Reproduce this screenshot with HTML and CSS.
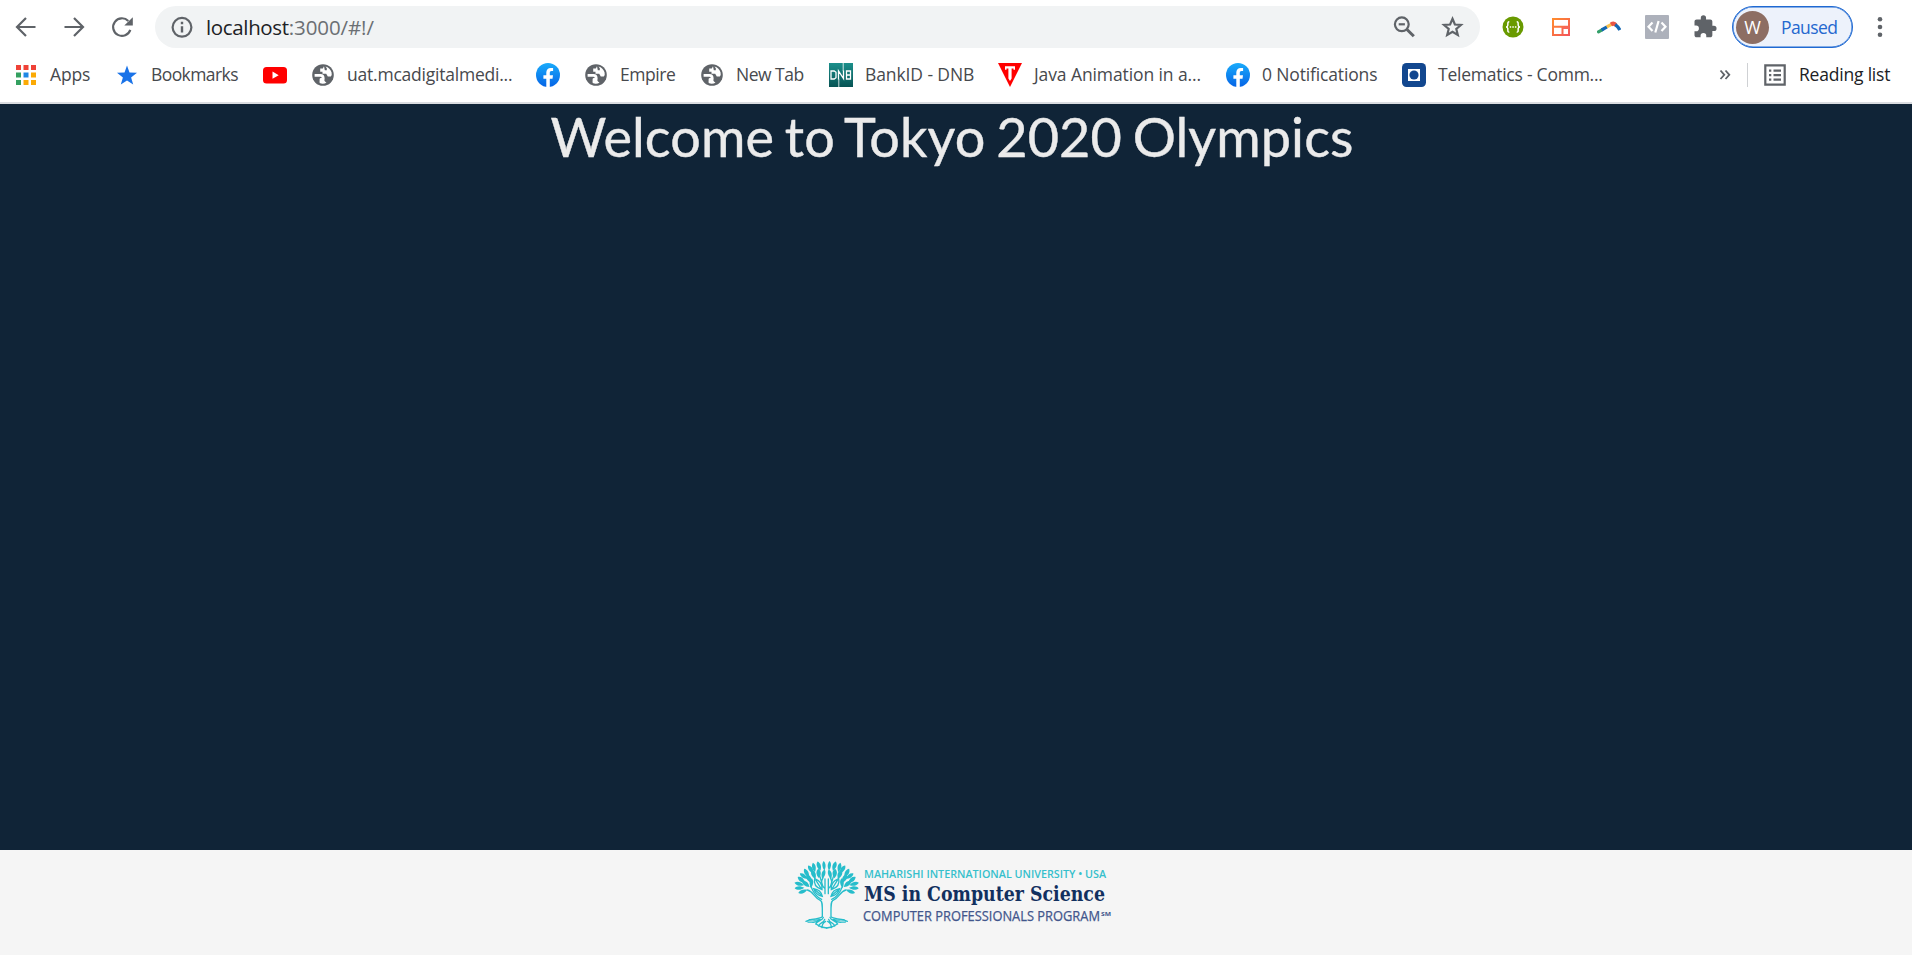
FILE: index.html
```html
<!DOCTYPE html>
<html lang="en">
<head>
<meta charset="utf-8">
<title>Tokyo 2020 Olympics</title>
<link rel="stylesheet" href="styles.css">
</head>
<body>
<svg class="defs" aria-hidden="true">
  <defs>
    <linearGradient id="fbg" x1="0" y1="0" x2="0" y2="1"><stop offset="0" stop-color="#19abfb"/><stop offset="1" stop-color="#0564e6"/></linearGradient>
    <linearGradient id="dnbg" x1="0" y1="0" x2="0" y2="1"><stop offset="0" stop-color="#1b8f8b"/><stop offset="1" stop-color="#075354"/></linearGradient>
    <linearGradient id="org" x1="0" y1="0" x2="1" y2="1"><stop offset="0" stop-color="#ff8b2d"/><stop offset="1" stop-color="#f4565a"/></linearGradient>
    <symbol id="globe" viewBox="0 0 24 24">
      <circle cx="12" cy="12" r="10.800" fill="#5f6368"/>
      <path fill="none" stroke="#fff" stroke-width="2.800" stroke-linejoin="round" d="M3.600 12.300H9.500C11.300 12.300 12.200 13.500 12.200 15.300V16.300H10V19.300"/>
      <path fill="#fff" d="M9.500 16H12.500L14 18.500L15.500 19.800Q12 21.500 8.600 20Z"/>
      <path fill="#fff" d="M13 3.300L11.800 5.600H9.200V8.800H11.500V10.800H15.200L16.800 13.600H19.800Q21.200 12 20.600 9.500C19.800 6.500 17.500 4 14.500 3.400L15.800 5.200V7.200H13.800Z"/>
    </symbol>
    <symbol id="fb" viewBox="0 0 24 24">
      <circle cx="12" cy="12" r="12" fill="url(#fbg)"/>
      <path fill="#fff" d="M10.300 24V15.700H7.400V12.300H10.300V9.600C10.300 6.600 12 4.900 14.700 4.900C15.900 4.900 17.100 5.100 17.100 5.100V8H15.600C14.200 8 13.800 8.900 13.800 9.800V12.300H17L16.500 15.700H13.800V24Z"/>
    </symbol>
    <path id="leaf" d="M0 -15C7 -8 7.500 2 0 14C-7.500 2 -7 -8 0 -15Z"/>
  </defs>
</svg>

<header class="chrome">
  <div class="toolbar">
    <nav class="nav">
      <svg class="i24" viewBox="0 0 24 24"><path class="line" d="M21.500 12H3.500M12 3L3 12L12 21"/></svg>
      <svg class="i24" viewBox="0 0 24 24"><path class="line" d="M2.500 12H20.500M12 3L21 12L12 21"/></svg>
      <svg class="i24" viewBox="0 0 24 24"><path class="line" d="M20.300 14.800A8.800 8.800 0 1 1 18.300 6"/><path class="solid" d="M22.800 2.200V10.600H14.300Z"/></svg>
    </nav>
    <div class="omnibox">
      <svg class="i24" viewBox="0 0 24 24"><circle class="line" cx="12" cy="12.300" r="9.400"/><path class="solid" d="M10.800 6.800H13.200V9.300H10.800ZM10.800 11.300H13.200V17.600H10.800Z"/></svg>
      <div class="url"><span class="host">localhost</span><span class="path">:3000/#!/</span></div>
      <svg class="i24 zoom" viewBox="0 0 24 24"><circle class="line" cx="9.800" cy="9.300" r="6.900"/><path class="line" d="M6.700 9.300H12.900"/><path class="line thick" d="M15 14.500L21.800 21.300"/></svg>
      <svg class="i24" viewBox="0 0 24 24"><path class="line miter" d="M12.500 3.800L14.900 9.500L21 10L16.300 14L17.800 20L12.500 16.800L7.200 20L8.700 14L4 10L10.100 9.500Z"/></svg>
    </div>
    <div class="extensions">
      <svg class="i24" viewBox="0 0 24 24"><circle cx="12" cy="12" r="10.500" fill="#699a00"/><path fill="none" stroke="#fff" stroke-width="1.500" d="M8.300 6.800C6.300 6.800 7 8.600 6.800 10.300C6.700 11.500 6.200 12 5 12C6.200 12 6.700 12.500 6.800 13.700C7 15.400 6.300 17.200 8.300 17.200M15.700 6.800C17.700 6.800 17 8.600 17.200 10.300C17.300 11.500 17.800 12 19 12C17.800 12 17.300 12.500 17.200 13.700C17 15.400 17.700 17.200 15.700 17.200"/><path stroke="#fff" stroke-width="1.500" stroke-dasharray="1.500 1.100" d="M8.700 12H15.600"/></svg>
      <svg class="i24" viewBox="0 0 24 24"><path fill="none" stroke="url(#org)" stroke-width="2" d="M4 4H20V20H4ZM4 11.800H20M13.500 11.800V20"/><path fill="#f7685a" d="M13.500 11.500H20V14H13.500Z"/></svg>
      <svg class="i24" viewBox="0 0 24 24"><g fill="none" stroke-width="3.200"><path stroke="#34a06a" stroke-linecap="round" d="M1.500 16.800L5 14.800"/><path stroke="#1467b3" d="M4.600 15L10 11.800"/><path stroke="#fbc14b" d="M9.800 11.900L14.500 9.300"/><path stroke="#e85545" stroke-width="4" d="M14 9.500Q17 7.500 19 10.300"/><path stroke="#1467b3" d="M18.200 9.600Q21 11.500 22.800 15"/></g></svg>
      <svg class="i24" viewBox="0 0 24 24"><rect width="24" height="24" rx="1" fill="#adb1bb"/><path fill="none" stroke="#fff" stroke-width="2.200" d="M7.500 7.500L3.500 11.700L7.500 16M16.500 7.500L20.500 11.700L16.500 16M13.600 6L10.300 17.500"/></svg>
      <svg class="i24" viewBox="0 0 24 24"><path class="solid" transform="translate(-.6 -.8) scale(1.050)" d="M20.500 11H19V7c0-1.100-.9-2-2-2h-4V3.500a2.500 2.500 0 0 0-5 0V5H4c-1.100 0-2 .9-2 2v3.800h1.500a2.700 2.700 0 0 1 0 5.400H2V20c0 1.100.9 2 2 2h3.800v-1.500a2.700 2.700 0 0 1 5.400 0V22H17c1.100 0 2-.9 2-2v-4h1.500a2.500 2.500 0 0 0 0-5z"/></svg>
    </div>
    <div class="profile"><span class="avatar">W</span><span class="paused">Paused</span></div>
    <svg class="i24 kebab" viewBox="0 0 24 24"><circle class="solid" cx="12" cy="4.300" r="2.300"/><circle class="solid" cx="12" cy="12" r="2.300"/><circle class="solid" cx="12" cy="19.700" r="2.300"/></svg>
  </div>

  <div class="bookmarks">
    <div class="bm"><svg class="i24" viewBox="0 0 24 24"><path fill="#ef4237" d="M2 2h5v5H2zM9.500 2h5v5h-5zM17 2h5v5h-5z"/><path fill="#34a060" d="M2 9.500h5v5H2zM2 17h5v5H2z"/><path fill="#1e88e5" d="M9.500 9.500h5v5h-5z"/><path fill="#fbaa04" d="M17 9.500h5v5h-5zM9.500 17h5v5h-5zM17 17h5v5h-5z"/></svg><span class="label w-apps">Apps</span></div>
    <div class="bm"><svg class="i24" viewBox="0 0 24 24"><path fill="#1a73e8" d="M12 2.500L14.500 9.600L22 9.800L16.100 14.400L18.200 21.600L12 17.400L5.800 21.600L7.900 14.400L2 9.800L9.500 9.600Z"/></svg><span class="label w-bookmarks">Bookmarks</span></div>
    <div class="bm"><svg class="i24" viewBox="0 0 24 24"><rect y="4" width="24" height="16.500" rx="3.500" fill="#f00"/><path fill="#fff" d="M9.500 8.600V15.800L15.700 12.200Z"/></svg></div>
    <div class="bm"><svg class="i24"><use href="#globe"/></svg><span class="label w-uat">uat.mcadigitalmedi...</span></div>
    <div class="bm"><svg class="i24"><use href="#fb"/></svg></div>
    <div class="bm"><svg class="i24"><use href="#globe"/></svg><span class="label w-empire">Empire</span></div>
    <div class="bm"><svg class="i24"><use href="#globe"/></svg><span class="label w-newtab">New Tab</span></div>
    <div class="bm"><svg class="i24" viewBox="0 0 24 24"><rect width="24" height="24" fill="url(#dnbg)"/><g fill="none" stroke="#fff" stroke-width="1.300"><path d="M2 8H5.200L7 9.300V14.700L5.200 16H2ZM9.500 16.500V8L14.500 15.500V7.500M17.500 8H21.500V16H17.500ZM17.500 12H21.500"/><path stroke-width=".8" d="M9.800 16V24M14.200 0V8"/></g></svg><span class="label w-bank">BankID - DNB</span></div>
    <div class="bm"><svg class="i24" viewBox="0 0 24 24"><path fill="#f00" d="M0 0H24L12 24Z"/><path fill="#fff" d="M7 3.200H17V6.800H15.500V5.500H13.600V15.500L12 18L10.400 15.500V5.500H8.500V6.800H7Z"/></svg><span class="label w-java">Java Animation in a...</span></div>
    <div class="bm"><svg class="i24"><use href="#fb"/></svg><span class="label w-notif">0 Notifications</span></div>
    <div class="bm"><svg class="i24" viewBox="0 0 24 24"><rect width="24" height="24" rx="4.500" fill="#12478f"/><rect x="6" y="6" width="12" height="12" fill="#fff"/><circle cx="12" cy="12" r="4.600" fill="#12478f"/></svg><span class="label w-tele">Telematics - Comm...</span></div>
    <div class="tail">
      <svg class="more" viewBox="0 0 12 12"><path d="M1.500 1.500L5.300 5.800L1.500 10M6.500 1.500L10.300 5.800L6.500 10"/></svg>
      <span class="divider"></span>
      <svg class="i24" viewBox="0 0 24 24"><path class="line miter" d="M2.300 2.300H21.700V21.700H2.300Z"/><path class="solid" d="M6 6.500H8.300V8.700H6ZM6 11H8.300V13.200H6ZM6 15.500H8.300V17.700H6ZM10.500 6.500H18V8.700H10.500ZM10.500 11H18V13.200H10.500ZM10.500 15.500H18V17.700H10.500Z"/></svg>
      <span class="label reading">Reading list</span>
    </div>
  </div>
</header>

<main class="page">
  <h1 class="title">Welcome to Tokyo 2020 Olympics</h1>
</main>

<footer class="footer">
  <svg class="logo" viewBox="0 0 330 80">
    <g transform="scale(.33333)" fill="#26bdcb" stroke="#26bdcb">
      <g id="half">
        <g stroke="none">
          <use href="#leaf" transform="translate(108 33) rotate(-5) scale(.9 1)"/>
          <use href="#leaf" transform="translate(93 34) rotate(-18) scale(1.100 1)"/>
          <use href="#leaf" transform="translate(78 38) rotate(-12)"/>
          <use href="#leaf" transform="translate(69 44) rotate(-35) scale(1.100 1)"/>
          <use href="#leaf" transform="translate(56 54) rotate(-30) scale(1.100 1)"/>
          <use href="#leaf" transform="translate(48 64) rotate(-55)"/>
          <use href="#leaf" transform="translate(41 75) rotate(-52) scale(1.100 1)"/>
          <use href="#leaf" transform="translate(34 87) rotate(-75)"/>
          <use href="#leaf" transform="translate(35 99) rotate(-92)"/>
          <use href="#leaf" transform="translate(45 109) rotate(-110)"/>
          <use href="#leaf" transform="translate(54 87) rotate(-50) scale(1.200 1)"/>
          <use href="#leaf" transform="translate(63 71) rotate(-28) scale(1.200 1)"/>
          <use href="#leaf" transform="translate(77 59) rotate(-22) scale(1.200 1)"/>
          <use href="#leaf" transform="translate(92 56) rotate(-5) scale(1.200 1)"/>
          <use href="#leaf" transform="translate(106 58) rotate(15)"/>
          <use href="#leaf" transform="translate(70 85) rotate(5)"/>
        </g>
        <g fill="none" stroke-width="4" stroke-linecap="round">
          <path d="M80 71C76 88 83 98 102 104C104 87 96 77 80 71ZM84 76L100 102"/>
          <path d="M77 101C82 117 90 122 103 124C100 111 91 103 77 101ZM81 104L100 121"/>
          <path d="M105 68C98 80 101 92 111 101M111 72V116M96 65L105 96"/>
          <path d="M58 105C77 109 78 129 98 137C104 141 103 150 103 185C98 190 86 191 64 194"/>
          <path d="M68 93C74 108 82 126 101 133"/>
          <path d="M54 199C72 190 82 199 96 193M60 201C75 201 84 205 96 196M83 207C89 196 103 197 106 187M92 213C94 202 107 205 110 193M102 218C102 207 107 202 113 199M84 207L91 211L101 216L116 219"/>
        </g>
      </g>
      <use href="#half" transform="translate(232 0) scale(-1 1)"/>
    </g>
    <g class="logo-text">
      <text class="l1" x="76" y="23" textLength="242" lengthAdjust="spacingAndGlyphs">MAHARISHI INTERNATIONAL UNIVERSITY • USA</text>
      <text class="l2" x="76" y="46" textLength="241" lengthAdjust="spacingAndGlyphs">MS in Computer Science</text>
      <text class="l3" x="75" y="65.500" textLength="237" lengthAdjust="spacingAndGlyphs">COMPUTER PROFESSIONALS PROGRAM</text>
      <text class="sm" x="313" y="61" textLength="10" lengthAdjust="spacingAndGlyphs">SM</text>
    </g>
  </svg>
</footer>
</body>
</html>
```

FILE: styles.css
```css
* { box-sizing: border-box; }

body {
  margin: 0;
  height: 955px;
  display: flex;
  flex-direction: column;
  overflow: hidden;
  background: #fff;
  font-family: "Open Sans", "Noto Sans", sans-serif;
}

.defs { position: absolute; width: 0; height: 0; }
.i24 { display: block; width: 24px; height: 24px; flex: none; }
.line { fill: none; stroke: #5f6368; stroke-width: 2.2; }
.thick { stroke-width: 3; }
.miter { stroke-linejoin: miter; }
.solid { fill: #5f6368; }

.chrome { height: 104px; flex: none; border-bottom: 2px solid #dadce0; }

.toolbar { height: 54px; display: flex; align-items: center; }
.nav { display: flex; gap: 24px; width: 155px; padding-left: 14px; }

.omnibox {
  width: 1325px;
  height: 42px;
  border-radius: 21px;
  background: #f1f3f4;
  display: flex;
  align-items: center;
  padding: 0 16px 0 15px;
}
.url { margin-left: 12px; font-size: 20.5px; line-height: 42px; white-space: nowrap; }
.host { color: #202124; letter-spacing: -0.35px; }
.path { color: #6b6f73; letter-spacing: -0.1px; }
.zoom { margin: 0 24px 0 auto; }

.extensions { display: flex; gap: 24px; margin-left: 21px; }

.profile {
  width: 121px;
  height: 42px;
  margin-left: 15px;
  border: 1px solid #1f69d2;
  box-shadow: inset 0 0 0 0.5px #1f69d2;
  border-radius: 21px;
  background: #edf2fb;
  display: flex;
  align-items: center;
  padding-left: 3px;
}
.avatar {
  width: 33px;
  height: 33px;
  border-radius: 50%;
  background: #8d6e63;
  color: #fff;
  font-size: 18px;
  line-height: 33px;
  text-align: center;
}
.paused { margin-left: 12px; font-size: 17.5px; letter-spacing: -0.6px; color: #2468cf; }
.kebab { margin-left: 15px; }

.bookmarks { height: 42px; display: flex; align-items: center; gap: 24px; padding-left: 14px; }
.bm { display: flex; align-items: center; gap: 12px; height: 24px; flex: none; }
.label { display: block; font-size: 17.5px; line-height: 24px; padding-bottom: 2px; letter-spacing: -0.5px; color: #47494d; white-space: nowrap; }
.w-apps { width: 41px; letter-spacing: -0.15px; }
.w-bookmarks { width: 88px; letter-spacing: -0.58px; }
.w-uat { width: 165px; letter-spacing: -0.22px; }
.w-empire { width: 56px; letter-spacing: -0.45px; }
.w-newtab { width: 69px; }
.w-bank { width: 109px; letter-spacing: -0.1px; }
.w-java { width: 168px; letter-spacing: -0.1px; }
.w-notif { width: 116px; letter-spacing: -0.15px; }
.w-tele { width: 164px; letter-spacing: -0.24px; }

.tail { display: flex; align-items: center; margin-left: auto; width: 193px; flex: none; }
.more { width: 12px; height: 12px; fill: none; stroke: #5f6368; stroke-width: 1.8; }
.divider { width: 1px; height: 24px; margin: 0 15px 0 16px; background: #cfd1d4; }
.reading { margin-left: 12px; color: #202124; letter-spacing: -0.2px; }

.page { flex: 1; background: #102437; text-align: center; padding-right: 8px; }
.title {
  margin: 0;
  font-family: Lato, sans-serif;
  font-weight: 400;
  font-size: 54px;
  line-height: 66px;
  letter-spacing: 0.1px;
  word-spacing: -3.2px;
  color: #ebebeb;
  -webkit-text-stroke: 0.4px #ebebeb;
}

.footer { height: 105px; flex: none; background: #f5f5f5; padding: 5px 0 0 788px; }
.logo { display: block; width: 330px; height: 80px; overflow: visible; }
.l1 { font-size: 11.5px; font-weight: 600; fill: #35c0cc; }
.l2 { font-family: "DejaVu Serif Condensed", "DejaVu Serif", serif; font-size: 20.5px; font-weight: 700; fill: #12305f; }
.l3 { font-size: 13.8px; fill: #42568c; stroke: #42568c; stroke-width: 0.25px; }
.sm { font-size: 6px; font-weight: 700; fill: #42568c; }
```
